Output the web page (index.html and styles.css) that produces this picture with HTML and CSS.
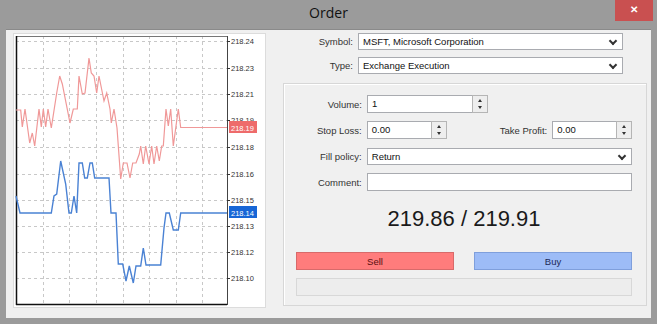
FILE: index.html
```html
<!DOCTYPE html>
<html lang="en">
<head>
<meta charset="UTF-8">
<title>Order</title>
<link rel="stylesheet" href="styles.css">
</head>
<body>
<div class="titlebar">
  <div class="title">Order</div>
  <div class="close">&#x2715;</div>
</div>
<div class="window">
  <div class="chart">
    <svg width="253" height="275" viewBox="13 32 253 275">
      <rect x="13.5" y="32.5" width="252" height="274" fill="#fff" stroke="#dcdcdc"/>
      <g class="grid">
        <line x1="43.5" y1="35" x2="43.5" y2="304"/>
        <line x1="69.5" y1="35" x2="69.5" y2="304"/>
        <line x1="96.5" y1="35" x2="96.5" y2="304"/>
        <line x1="123.5" y1="35" x2="123.5" y2="304"/>
        <line x1="149.5" y1="35" x2="149.5" y2="304"/>
        <line x1="176.5" y1="35" x2="176.5" y2="304"/>
        <line x1="202.5" y1="35" x2="202.5" y2="304"/>
        <line x1="16" y1="40.5" x2="227" y2="40.5"/>
        <line x1="16" y1="67.5" x2="227" y2="67.5"/>
        <line x1="16" y1="93.5" x2="227" y2="93.5"/>
        <line x1="16" y1="119.5" x2="227" y2="119.5"/>
        <line x1="16" y1="146.5" x2="227" y2="146.5"/>
        <line x1="16" y1="173.5" x2="227" y2="173.5"/>
        <line x1="16" y1="199.5" x2="227" y2="199.5"/>
        <line x1="16" y1="225.5" x2="227" y2="225.5"/>
        <line x1="16" y1="251.5" x2="227" y2="251.5"/>
        <line x1="16" y1="277.5" x2="227" y2="277.5"/>
      </g>
      <line x1="16" y1="35.5" x2="227" y2="35.5" stroke="#777"/>
      <line x1="16.5" y1="35" x2="16.5" y2="304" stroke="#111" stroke-width="1.5"/>
      <line x1="16" y1="303.5" x2="227" y2="303.5" stroke="#111" stroke-width="1.5"/>
      <line x1="227.5" y1="35" x2="227.5" y2="304" stroke="#444"/>
      <g class="ticks">
        <line x1="227" y1="40.5" x2="230" y2="40.5"/>
        <line x1="227" y1="67.5" x2="230" y2="67.5"/>
        <line x1="227" y1="93.5" x2="230" y2="93.5"/>
        <line x1="227" y1="119.5" x2="230" y2="119.5"/>
        <line x1="227" y1="146.5" x2="230" y2="146.5"/>
        <line x1="227" y1="173.5" x2="230" y2="173.5"/>
        <line x1="227" y1="199.5" x2="230" y2="199.5"/>
        <line x1="227" y1="225.5" x2="230" y2="225.5"/>
        <line x1="227" y1="251.5" x2="230" y2="251.5"/>
        <line x1="227" y1="277.5" x2="230" y2="277.5"/>
      </g>
      <g class="axis">
        <text x="231" y="43">218.24</text>
        <text x="231" y="70">218.23</text>
        <text x="231" y="96">218.21</text>
        <text x="231" y="122">218.19</text>
        <text x="231" y="149">218.18</text>
        <text x="231" y="176">218.16</text>
        <text x="231" y="202">218.15</text>
        <text x="231" y="228">218.13</text>
        <text x="231" y="254">218.12</text>
        <text x="231" y="280">218.10</text>
      </g>
      <polyline class="ask" points="16,109 20.7,109 22.3,126 25,108 29.7,142 32.3,132 34.7,145 39,108 41.3,126 43.3,108 45.7,126 48,108 51.3,127 56.7,92 59.7,75 62.3,83 70,122 73.3,108 77.3,108 79,75 82.3,93 85,92 89,57 91.3,72 94,75 96.7,92 99,75 104,100 106.7,92 110,108 111.3,122 114,108 117,127 120.7,178 123.3,162 127,162 130,177 132.7,162 136,162 139.3,153 140.7,145 143.3,163 145.7,145 149,163 151.7,145 154,163 156.7,145 159.3,160 161.7,145 163.3,145 166,108 168.3,125 170.7,108 173.3,145 176,125 178.3,108 180.7,126.5 227,126.5"/>
      <polyline class="bid" points="16,195 20,212 51.3,212 54,195 56.7,193 60.7,160 65.7,183 69,212 71.3,212 74,195 76.7,212 79,162 82.3,162 84.7,177 87.3,177 90,162 92.3,162 94.7,177 109,177 111,212 116,212 118.3,263 122.7,263 126,280 129.3,265 133.3,282 136,265 140.7,265 143.3,247 146,264 160.7,264 164,227 166,212 169.3,212 173.3,229 178.3,229 180.7,212 227,212"/>
      <rect x="229" y="120" width="28" height="12" fill="#ee6b6b"/>
      <text class="tag" x="231" y="129.5">218.19</text>
      <rect x="229" y="205" width="28" height="12" fill="#1766d6"/>
      <text class="tag" x="231" y="214.5">218.14</text>
    </svg>
  </div>
  <div class="form">
    <div class="row top-row">
      <label>Symbol:</label>
      <div class="select wide">MSFT, Microsoft Corporation</div>
    </div>
    <div class="row top-row">
      <label>Type:</label>
      <div class="select wide">Exchange Execution</div>
    </div>
    <div class="group">
      <div class="row">
        <label class="lbl">Volume:</label>
        <div class="input volume">1<span class="spin"></span></div>
      </div>
      <div class="row">
        <label class="lbl">Stop Loss:</label>
        <div class="input small">0.00<span class="spin"></span></div>
        <label class="tp">Take Profit:</label>
        <div class="input small">0.00<span class="spin"></span></div>
      </div>
      <div class="row">
        <label class="lbl">Fill policy:</label>
        <div class="select full">Return</div>
      </div>
      <div class="row">
        <label class="lbl">Comment:</label>
        <div class="input full"></div>
      </div>
      <div class="price">219.86 / 219.91</div>
      <div class="buttons">
        <button class="sell">Sell</button>
        <button class="buy">Buy</button>
      </div>
      <div class="progress"></div>
    </div>
  </div>
</div>
</body>
</html>
```

FILE: styles.css
```css
body {
  margin: 0;
  background: #9b9b9b;
  font-family: "Liberation Sans", Arial, sans-serif;
  font-size: 9.5px;
  color: #222;
}

.titlebar {
  display: flex;
  height: 29px;
}

.title {
  flex: 1;
  padding-left: 42px;
  text-align: center;
  font-family: "Open Sans", sans-serif;
  font-size: 14px;
  line-height: 26px;
  color: #111;
}

.close {
  width: 38px;
  height: 21px;
  margin-right: 4px;
  background: #c95050;
  color: #fff;
  font-size: 10px;
  font-weight: bold;
  text-align: center;
  line-height: 20px;
}

.window {
  display: flex;
  margin: 0 6px;
  height: 289px;
  box-sizing: border-box;
  padding: 3px 0 0 7px;
  background: #f0f0f0;
  border-top: 1px solid #8a8a8a;
}

.chart svg {
  display: block;
}

.grid line {
  stroke: #c8c8c8;
  stroke-dasharray: 3 3;
}

.ticks line {
  stroke: #333;
}

.axis text {
  font-size: 7.5px;
  fill: #333;
}

.tag {
  font-size: 7.5px;
  fill: #fff;
}

.ask {
  fill: none;
  stroke: #f09898;
  stroke-width: 1.2;
}

.bid {
  fill: none;
  stroke: #4a82d4;
  stroke-width: 1.4;
}

.form {
  margin-left: 17px;
  width: 364px;
}

.row {
  display: flex;
  align-items: center;
  height: 18px;
  margin-bottom: 8px;
}

.row label {
  text-align: right;
  margin-right: 5px;
  color: #333;
}

.top-row {
  height: 16px;
  margin-bottom: 8px;
}

.top-row label {
  width: 70px;
}

.select, .input {
  position: relative;
  box-sizing: border-box;
  height: 17px;
  line-height: 15px;
  padding-left: 4px;
  background: #fff;
  border: 1px solid #a9abb0;
  color: #111;
}

.input {
  height: 18px;
  line-height: 16px;
}

.select::after {
  content: "";
  position: absolute;
  right: 6px;
  top: 4px;
  width: 4px;
  height: 4px;
  border-right: 2px solid #333;
  border-bottom: 2px solid #333;
  transform: rotate(45deg);
}

.select.wide {
  width: 265px;
}

.group {
  box-sizing: border-box;
  height: 223px;
  margin-top: 10px;
  padding: 11px 14px 0 0;
  border: 1px solid #d7d7d7;
  box-shadow: inset 1px 1px 0 #fff;
}

.group .lbl {
  width: 78px;
}

.volume {
  width: 121px;
}

.small {
  width: 80px;
}

.tp {
  width: 101px;
}

.full {
  width: 266px;
}

.spin {
  position: absolute;
  right: -1px;
  top: -1px;
  width: 16px;
  height: 18px;
  box-sizing: border-box;
  border: 1px solid #b5b5b5;
  background: #eee;
}

.spin::before, .spin::after {
  content: "";
  position: absolute;
  left: 5px;
  border-left: 2.5px solid transparent;
  border-right: 2.5px solid transparent;
}

.spin::before {
  top: 3px;
  border-bottom: 3px solid #333;
}

.spin::after {
  bottom: 3px;
  border-top: 3px solid #333;
}

.price {
  margin-top: 15px;
  text-align: center;
  padding-left: 12px;
  font-size: 22px;
  line-height: 26px;
  color: #1a1a1a;
}

.buttons {
  display: flex;
  justify-content: space-between;
  margin: 20px 0 0 12px;
}

button {
  width: 158px;
  height: 18px;
  padding: 0;
  font-family: "Liberation Sans", Arial, sans-serif;
  font-size: 9.5px;
  border: 1px solid;
}

.sell {
  background: #ff7c7c;
  border-color: #d86a6a;
  color: #5a1010;
}

.buy {
  background: #9dbcf7;
  border-color: #7f9fdc;
  color: #1c2858;
}

.progress {
  height: 18px;
  margin: 8px 0 0 12px;
  box-sizing: border-box;
  background: #ededed;
  border: 1px solid #d8d8d8;
}
```
